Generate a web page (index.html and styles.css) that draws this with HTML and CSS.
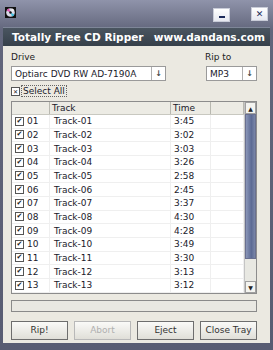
FILE: index.html
```html
<!DOCTYPE html>
<html>
  <head>
    <meta charset="utf-8">
    <title>Totally Free CD Ripper</title>
    <link rel="stylesheet" href="styles.css">
  </head>
  <body>
    <div class="window">
      <div class="titlebar">
        <div class="appicon">
          <svg width="11" height="11" viewBox="0 0 11 11">
            <rect width="11" height="11" fill="#111"/>
            <circle cx="5.5" cy="5.5" r="4.3" fill="#d9d9e6"/>
            <path d="M5.5 5.5 L1.6 3.5 A4.3 4.3 0 0 1 4 1.4 Z" fill="#e04fb0"/>
            <path d="M5.5 5.5 L9.4 7.5 A4.3 4.3 0 0 1 7 9.6 Z" fill="#40c0e0"/>
            <path d="M5.5 5.5 L7 1.4 A4.3 4.3 0 0 1 9.4 3.5 Z" fill="#f0f0f0"/>
            <circle cx="5.5" cy="5.5" r="1.2" fill="#111"/>
          </svg>
        </div>
        <div class="spacer"></div>
        <div class="wbtn min"><span></span></div>
        <div class="wbtn close">&#x2715;</div>
      </div>
      <div class="banner">
        <span>Totally Free CD Ripper</span>
        <span>www.dandans.com</span>
      </div>
      <div class="panel">
        <div class="fields">
          <div class="field drive">
            <label>Drive</label>
            <div class="select"><span class="val">Optiarc DVD RW AD-7190A</span><span class="arrow">&#x2193;</span></div>
          </div>
          <div class="field ripto">
            <label>Rip to</label>
            <div class="select"><span class="val">MP3</span><span class="arrow">&#x2193;</span></div>
          </div>
        </div>
        <div class="selectall"><span class="box x">&#x2715;</span><span class="focus">Select All</span></div>
        <div class="list">
          <div class="grid">
            <div class="head">
              <div class="c1"></div><div class="c2">Track</div><div class="c3">Time</div><div class="c4"></div>
            </div>
            <div id="rows"></div>
          </div>
          <div class="scroll">
            <div class="sarrow">&#x25B2;</div>
            <div class="strack"><div class="thumb"></div></div>
            <div class="sarrow">&#x25BC;</div>
          </div>
        </div>
        <div class="progress"></div>
        <div class="buttons">
          <div class="btn">Rip!</div>
          <div class="btn disabled">Abort</div>
          <div class="btn">Eject</div>
          <div class="btn">Close Tray</div>
        </div>
      </div>
    </div>
    <script>
      var times = ['3:45','3:02','3:03','3:26','2:58','2:45','3:37','4:30','4:28','3:49','3:30','3:13','3:12'];
      var rows = document.getElementById('rows');
      for (var i = 0; i < times.length; i++) {
        var n = (i + 1 < 10 ? '0' : '') + (i + 1);
        var r = document.createElement('div');
        r.className = 'row';
        r.innerHTML = '<div class="c1"><span class="box">&#x2714;</span>' + n + '</div>' +
          '<div class="c2">Track-' + n + '</div><div class="c3">' + times[i] + '</div><div class="c4"></div>';
        rows.appendChild(r);
      }
    </script>
  </body>
</html>
```

FILE: styles.css
```css
* {
  box-sizing: border-box;
}
body {
  margin: 0;
  font-family: "DejaVu Sans", Verdana, sans-serif;
  font-size: 9px;
  color: #1a1a2a;
}
.window {
  width: 273px;
  height: 350px;
  background: linear-gradient(#8f93aa, #62667c 30px, #585c72);
  display: flex;
  flex-direction: column;
  padding: 0 3px 7px 3px;
}
.titlebar {
  height: 27px;
  display: flex;
  align-items: flex-start;
  padding-top: 7px;
}
.appicon {
  margin-left: 2px;
  width: 11px;
  height: 11px;
}
.spacer {
  flex: 1;
}
.wbtn {
  width: 17px;
  height: 14px;
  background: linear-gradient(#ffffff, #e6e8f0);
  border: 1px solid #c9ccd8;
  color: #1c2a5a;
  font-weight: bold;
  font-size: 9px;
  text-align: center;
  line-height: 12px;
}
.wbtn.min {
  margin-right: 21px;
  position: relative;
  margin-top: 1px;
}
.wbtn.min span {
  position: absolute;
  left: 5px;
  bottom: 3px;
  width: 6px;
  height: 2px;
  background: #1c2a5a;
}
.wbtn.close {
  margin-right: 2px;
}
.banner {
  height: 19px;
  background: linear-gradient(#4a5560, #36404a);
  color: #fff;
  font-weight: bold;
  font-size: 10.5px;
  display: flex;
  justify-content: space-between;
  align-items: center;
  padding: 0 5px 0 9px;
  border-top: 1px solid #7e8698;
}
.panel {
  flex: 1;
  background: #ebe9e1;
  padding: 6px 13px 0 8px;
  display: flex;
  flex-direction: column;
}
.fields {
  display: flex;
  justify-content: space-between;
}
.field label {
  display: block;
  height: 11px;
  line-height: 11px;
  margin-bottom: 3px;
  color: #222;
}
.ripto label {
  margin-left: -1px;
}
.select {
  height: 15px;
  background: #fff;
  border: 1px solid #9a9a9a;
  display: flex;
  align-items: center;
}
.drive .select {
  width: 155px;
}
.ripto .select {
  width: 51px;
}
.select .val {
  flex: 1;
  padding-left: 3px;
  white-space: nowrap;
  overflow: hidden;
}
.select .arrow {
  width: 14px;
  height: 13px;
  border-left: 1px solid #b0b0b0;
  text-align: center;
  line-height: 13px;
  font-weight: bold;
  color: #444;
  font-size: 8px;
}
.selectall {
  margin-top: 4px;
  display: flex;
  align-items: center;
  height: 12px;
}
.box {
  width: 9px;
  height: 9px;
  border: 1px solid #555;
  background: #fff;
  font-size: 7px;
  line-height: 7px;
  text-align: center;
  color: #222;
  display: inline-block;
  margin-right: 3px;
  flex: none;
}
.box.x {
  margin-right: 1px;
  font-size: 6px;
}
.focus {
  border: 1px dotted #666;
  padding: 0 1px;
  line-height: 10px;
}
.list {
  margin-top: 4px;
  height: 193px;
  display: flex;
  border: 1px solid #8c8c8c;
  background: #fff;
}
.grid {
  flex: 1;
  display: flex;
  flex-direction: column;
}
.head, .row {
  display: grid;
  grid-template-columns: 38px 121px 40px 1fr;
}
.head {
  height: 13px;
  background: #ecebe4;
  border-bottom: 1px solid #c8c8c0;
}
.head > div {
  border-right: 1px solid #b8b8b0;
  line-height: 12px;
  padding-left: 2px;
}
.row {
  height: 13.67px;
  border-bottom: 1px solid #efefef;
}
.row > div {
  border-right: 1px solid #efefef;
  display: flex;
  align-items: center;
}
.row .c1 {
  padding-left: 3px;
}
.row .c2 {
  padding-left: 4px;
}
.row .c3 {
  padding-left: 3px;
}
.scroll {
  width: 12px;
  display: flex;
  flex-direction: column;
  background: #e8e8e2;
  border-left: 1px solid #c4c4c4;
}
.sarrow {
  height: 12px;
  font-size: 6px;
  text-align: center;
  line-height: 12px;
  color: #222;
  background: #f4f4f0;
  border: 1px solid #a0a0a0;
}
.strack {
  flex: 1;
  padding-bottom: 22px;
}
.thumb {
  height: 100%;
  background: linear-gradient(90deg, #8a96b8, #5c6a94 60%, #7a86a8);
  border: 1px solid #6a7090;
}
.progress {
  margin-top: 6px;
  height: 12px;
  width: 246px;
  border: 1px solid #8a8a8a;
  background: #e9e8e2;
}
.buttons {
  margin-top: 9px;
  display: flex;
  gap: 6px;
}
.btn {
  width: 58px;
  height: 19px;
  border: 1px solid #6e6e6e;
  background: linear-gradient(#fafaf8, #e0dfd8);
  text-align: center;
  line-height: 17px;
  color: #333;
}
.btn.disabled {
  color: #b0b0b0;
  border-color: #b8b8b8;
}
```
